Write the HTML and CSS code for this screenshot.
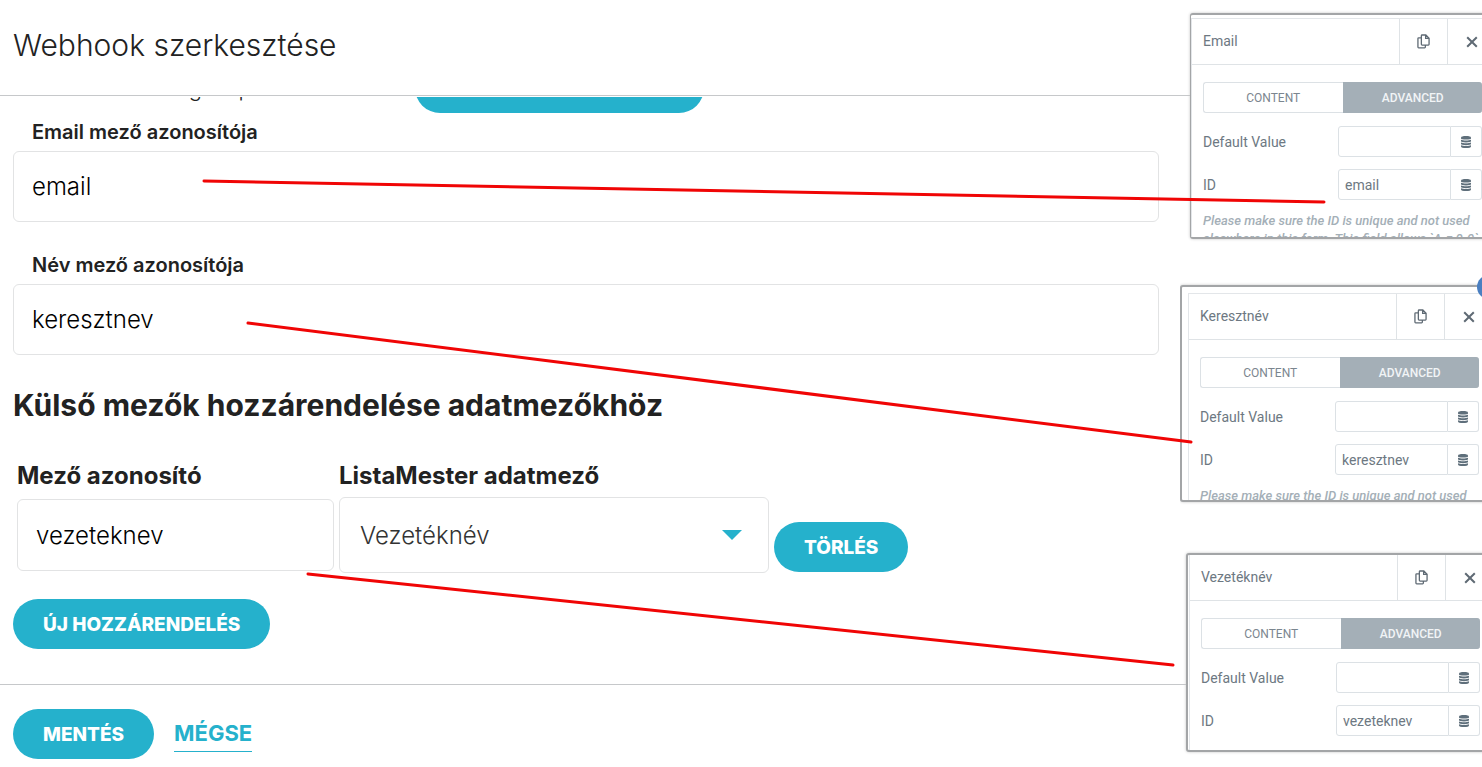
FILE: index.html
```
<!DOCTYPE html>
<html lang="hu">
<head>
  <meta charset="UTF-8">
  <title>Webhook szerkesztése</title>
  <link rel="stylesheet" href="styles.css">
</head>
<body>

<svg width="0" height="0" class="sprite">
  <symbol id="copy" viewBox="0 0 14 16">
    <path d="M5.500 1h4L13 4.500V11a.8.8 0 0 1-.8.8H5.500a.8.8 0 0 1-.8-.8V1.800A.8.8 0 0 1 5.500 1zM9.300 1v3.700H13M4.700 4H1.800a.8.8 0 0 0-.8.8v9.200c0 .5.300.8.800.8h6.400c.5 0 .8-.3.800-.8v-2" fill="none" stroke="currentColor" stroke-width="1.400"/>
  </symbol>
  <symbol id="close" viewBox="0 0 12 12">
    <path d="M1.200 1.200l9.600 9.600M10.800 1.200l-9.600 9.600" fill="none" stroke="currentColor" stroke-width="2"/>
  </symbol>
  <symbol id="database" viewBox="0 0 10 12">
    <path d="M0 1.500C0 .5 2 0 5 0s5 .5 5 1.500v1C10 3.300 8 3.600 5 3.600S0 3.300 0 2.500z"/>
    <path d="M0 3.700c1 .6 3 .7 5 .7s4-.1 5-.7v1.600C10 6.100 8 6.400 5 6.400S0 6.100 0 5.300z"/>
    <path d="M0 6.500c1 .6 3 .7 5 .7s4-.1 5-.7v1.600c0 .8-2 1.100-5 1.100S0 8.900 0 8.100z"/>
    <path d="M0 9.300c1 .6 3 .7 5 .7s4-.1 5-.7v1.200c0 1-2 1.500-5 1.500s-5-.5-5-1.500z"/>
  </symbol>
</svg>

<div class="dialog">
  <header class="dialog-header">
    <h1>Webhook szerkesztése</h1>
  </header>

  <form class="dialog-body">
    <div class="group-row">
      <span class="group-name">Kiválasztott cégcsoport</span>
      <button type="button" class="btn group-btn">CSOPORTVÁLASZTÁS</button>
    </div>

    <div class="field">
      <label for="emailField">Email mező azonosítója</label>
      <input type="text" id="emailField" value="email">
    </div>

    <div class="field">
      <label for="nameField">Név mező azonosítója</label>
      <input type="text" id="nameField" value="keresztnev">
    </div>

    <h2>Külső mezők hozzárendelése adatmezőkhöz</h2>

    <div class="mapping">
      <div class="mapping-col mapping-id">
        <label for="mapId">Mező azonosító</label>
        <input type="text" id="mapId" value="vezeteknev">
      </div>
      <div class="mapping-col mapping-target">
        <label for="mapTarget">ListaMester adatmező</label>
        <div class="select-wrap">
          <select id="mapTarget">
            <option>Vezetéknév</option>
          </select>
          <svg class="caret" viewBox="0 0 20 10"><path d="M0 0h20L10 10z"/></svg>
        </div>
      </div>
      <button type="button" class="btn">TÖRLÉS</button>
    </div>

    <button type="button" class="btn">ÚJ HOZZÁRENDELÉS</button>
  </form>

  <footer class="dialog-footer">
    <button type="submit" class="btn">MENTÉS</button>
    <a href="#" class="cancel">MÉGSE</a>
  </footer>
</div>

<!-- Form builder panels floating over the dialog -->
<aside class="panels">
  <section class="panel panel-email">
    <div class="panel-inner">
      <div class="panel-head">
        <span class="panel-title">Email</span>
        <button type="button" aria-label="Duplicate"><svg class="icon-copy"><use href="#copy"/></svg></button>
        <button type="button" aria-label="Close"><svg class="icon-close"><use href="#close"/></svg></button>
      </div>
      <div class="panel-content">
        <div class="tabs">
          <button type="button">CONTENT</button>
          <button type="button" class="active">ADVANCED</button>
        </div>
        <div class="control">
          <label for="email-default">Default Value</label>
          <input type="text" id="email-default">
          <button type="button" aria-label="Dynamic"><svg class="icon-db"><use href="#database"/></svg></button>
        </div>
        <div class="control">
          <label for="email-id">ID</label>
          <input type="text" id="email-id" value="email">
          <button type="button" aria-label="Dynamic"><svg class="icon-db"><use href="#database"/></svg></button>
        </div>
        <p class="hint">Please make sure the ID is unique and not used<br>elsewhere in this form. This field allows `A-z 0-9`</p>
      </div>
    </div>
  </section>

  <section class="panel panel-first">
    <span class="dot"></span>
    <div class="panel-inner">
      <div class="panel-head">
        <span class="panel-title">Keresztnév</span>
        <button type="button" aria-label="Duplicate"><svg class="icon-copy"><use href="#copy"/></svg></button>
        <button type="button" aria-label="Close"><svg class="icon-close"><use href="#close"/></svg></button>
      </div>
      <div class="panel-content">
        <div class="tabs">
          <button type="button">CONTENT</button>
          <button type="button" class="active">ADVANCED</button>
        </div>
        <div class="control">
          <label for="first-default">Default Value</label>
          <input type="text" id="first-default">
          <button type="button" aria-label="Dynamic"><svg class="icon-db"><use href="#database"/></svg></button>
        </div>
        <div class="control">
          <label for="first-id">ID</label>
          <input type="text" id="first-id" value="keresztnev">
          <button type="button" aria-label="Dynamic"><svg class="icon-db"><use href="#database"/></svg></button>
        </div>
        <p class="hint">Please make sure the ID is unique and not used</p>
      </div>
    </div>
  </section>

  <section class="panel panel-last">
    <div class="panel-inner">
      <div class="panel-head">
        <span class="panel-title">Vezetéknév</span>
        <button type="button" aria-label="Duplicate"><svg class="icon-copy"><use href="#copy"/></svg></button>
        <button type="button" aria-label="Close"><svg class="icon-close"><use href="#close"/></svg></button>
      </div>
      <div class="panel-content">
        <div class="tabs">
          <button type="button">CONTENT</button>
          <button type="button" class="active">ADVANCED</button>
        </div>
        <div class="control">
          <label for="last-default">Default Value</label>
          <input type="text" id="last-default">
          <button type="button" aria-label="Dynamic"><svg class="icon-db"><use href="#database"/></svg></button>
        </div>
        <div class="control">
          <label for="last-id">ID</label>
          <input type="text" id="last-id" value="vezeteknev">
          <button type="button" aria-label="Dynamic"><svg class="icon-db"><use href="#database"/></svg></button>
        </div>
      </div>
    </div>
  </section>
</aside>

<!-- Lines from each field to its panel -->
<svg class="connectors" viewBox="0 0 1482 767" preserveAspectRatio="none">
  <path d="M204 181L1324 202"/>
  <path d="M248 323L1191 442"/>
  <path d="M308 574L1173 665"/>
</svg>

</body>
</html>
```

FILE: styles.css
```
* {
  box-sizing: border-box;
}

body {
  margin: 0;
  position: relative;
  min-height: 100vh;
  overflow: hidden;
  background: #fff;
  color: #222;
  font-family: Inter, sans-serif;
}

button, input, select {
  font-family: inherit;
}

.sprite {
  display: none;
}

.dialog {
  display: flex;
  flex-direction: column;
  min-height: 100vh;
}

.dialog-header {
  padding: 25px 13px 30px;
  border-bottom: 1px solid #c6c8ca;
}

h1 {
  margin: 0;
  font-size: 30px;
  line-height: 40px;
  font-weight: 300;
}

/* Scrolled body, the first row is partly under the header */
.dialog-body {
  flex: 1;
  overflow: hidden;
  padding: 0 323px 0 13px;
  margin-top: 1px;
}

.group-row {
  display: flex;
  align-items: center;
  margin-top: -34px;
}

.group-name {
  width: 402px;
  padding-left: 28px;
  font-size: 22px;
  font-weight: 300;
}

.group-btn {
  width: 289px;
}

.btn {
  height: 50px;
  padding: 0 30px;
  border: 0;
  border-radius: 25px;
  background: #25b1cc;
  color: #fff;
  font-size: 19px;
  font-weight: 800;
  white-space: nowrap;
}

.field {
  margin: 6px 0 30px;
}

.field label {
  display: block;
  padding: 0 19px;
  font-size: 20px;
  line-height: 26px;
  font-weight: 600;
  margin-bottom: 6px;
}

.field input, .mapping input, select {
  display: block;
  width: 100%;
  height: 71px;
  padding: 0 18px;
  border: 1px solid #e2e3e4;
  border-radius: 6px;
  background: #fff;
  color: #000;
  font-size: 24px;
  font-weight: 300;
}

h2 {
  margin: 0 0 34px;
  font-size: 30px;
  line-height: 40px;
  font-weight: 700;
}

.mapping {
  display: flex;
  align-items: flex-end;
  gap: 5px;
  padding-left: 4px;
  margin-bottom: 26px;
}

.mapping-id {
  width: 317px;
}

.mapping-target {
  width: 430px;
}

.mapping-col label {
  display: block;
  font-size: 24px;
  line-height: 34px;
  font-weight: 700;
}

.mapping .mapping-id input {
  height: 72px;
  margin: 6px 0 2px;
}

.mapping .btn {
  margin-bottom: 1px;
}

.select-wrap {
  position: relative;
  margin-top: 4px;
}

.mapping select {
  height: 76px;
  padding: 0 20px;
  appearance: none;
  color: #333;
}

.caret {
  position: absolute;
  right: 27px;
  top: 33px;
  width: 20px;
  height: 10px;
  fill: #25b1cc;
}

.dialog-footer {
  display: flex;
  align-items: center;
  gap: 20px;
  padding: 24px 13px 8px;
  border-top: 1px solid #c6c8ca;
}

.cancel {
  padding-bottom: 2px;
  border-bottom: 1px solid #25b1cc;
  color: #25b1cc;
  font-size: 22px;
  line-height: 32px;
  font-weight: 700;
  text-decoration: none;
}

/* Panels */
.panels {
  position: absolute;
  top: 0;
  right: 0;
  width: 302px;
  height: 100%;
  overflow: hidden;
  padding-top: 13px;
  font-family: Roboto, sans-serif;
  color: #6d7882;
}

.panel {
  position: relative;
  width: 330px;
  border: 2px solid #a3a5a7;
  border-radius: 3px;
  background: #fff;
  box-shadow: 0 0 3px #c4c4c4;
}

.panel-email {
  height: 226px;
  margin-left: 10px;
  padding-top: 3px;
  border-left-width: 1px;
}

.panel-first {
  height: 217px;
  margin-top: 46px;
  padding: 6px 0 0 6px;
}

.panel-last {
  margin-top: 51px;
  margin-left: 6px;
  padding-left: 1px;
}

.panel-inner {
  height: 100%;
  width: 304px;
  overflow: hidden;
  border-left: 1px solid #e3e6e9;
  border-top: 1px solid #e3e6e9;
}

.panel-last .panel-inner {
  border-top: 0;
}

.dot {
  position: absolute;
  left: 295px;
  top: -12px;
  width: 24px;
  height: 24px;
  border-radius: 50%;
  background: #4a7fc1;
}

.panel-head {
  display: grid;
  grid-template-columns: 1fr 48px 48px;
  height: 46px;
  border-bottom: 1px solid #dfe3e6;
}

.panel-title {
  padding-left: 11px;
  font-size: 14px;
  line-height: 44px;
}

.panel-head button {
  display: flex;
  align-items: center;
  justify-content: center;
  padding: 0;
  border: 0;
  border-left: 1px solid #dfe3e6;
  background: none;
  color: #5f6a74;
}

.icon-copy {
  width: 13px;
  height: 15px;
}

.icon-close {
  width: 12px;
  height: 12px;
}

.panel-content {
  padding: 17px 13px 14px 11px;
}

.tabs {
  display: flex;
  margin-bottom: 13px;
}

.tabs button {
  flex: 1;
  height: 31px;
  border: 1px solid #dce1e5;
  border-right: 0;
  border-radius: 3px 0 0 3px;
  background: #fff;
  color: #7b868f;
  font-size: 12px;
}

.tabs .active {
  border-color: #a4afb7;
  border-radius: 0 3px 3px 0;
  background: #a4afb7;
  color: #f1f4f6;
  font-weight: 500;
}

.control {
  display: grid;
  grid-template-columns: 1fr 113px 31px;
  align-items: center;
  margin-bottom: 12px;
}

.panel-last .control:last-child {
  margin-bottom: 0;
}

.control label {
  font-size: 14px;
}

.control input, .control button {
  height: 31px;
  width: 100%;
  border: 1px solid #dce1e5;
  background: #fff;
  color: #6d7882;
}

.control input {
  padding: 0 6px;
  border-radius: 3px 0 0 3px;
  font-size: 14px;
}

.control button {
  display: flex;
  align-items: center;
  justify-content: center;
  padding: 0;
  border-left: 0;
  border-radius: 0 3px 3px 0;
}

.icon-db {
  width: 10px;
  height: 12px;
  fill: #5f6f7b;
}

.hint {
  margin: 0;
  color: #a4afb7;
  font-size: 13px;
  line-height: 18px;
  font-style: italic;
  font-weight: 500;
  white-space: nowrap;
}

.connectors {
  position: absolute;
  inset: 0;
  width: 100%;
  height: 100%;
  pointer-events: none;
  fill: none;
  stroke: #f00505;
  stroke-width: 3;
  stroke-linecap: round;
}
```
